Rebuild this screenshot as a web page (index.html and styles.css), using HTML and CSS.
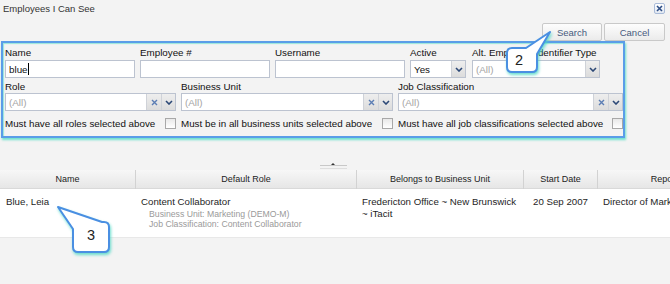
FILE: index.html
```html
<!DOCTYPE html>
<html>
<head>
<meta charset="utf-8">
<link rel="stylesheet" href="styles.css">
</head>
<body>
<div class="dialog">
  <header class="titlebar">
    <span class="title">Employees I Can See</span>
    <button class="close" aria-label="Close"><svg width="7" height="7" viewBox="0 0 7 7"><path d="M1 1L6 6M6 1L1 6" stroke="#2f4f86" stroke-width="1.6"/></svg></button>
  </header>
  <div class="actions">
    <button class="btn btn-search">Search</button>
    <button class="btn btn-cancel">Cancel</button>
  </div>

  <section class="filters">
    <div class="row row-1">
      <div class="field f-name"><label>Name</label><div class="input"><span class="val">blue</span><span class="caret"></span></div></div>
      <div class="field f-emp"><label>Employee #</label><div class="input"></div></div>
      <div class="field f-user"><label>Username</label><div class="input"></div></div>
      <div class="field f-active"><label>Active</label><div class="input"><span class="val grow">Yes</span><span class="trig"><svg width="8" height="5" viewBox="0 0 8 5"><path d="M1 1L4 4L7 1" fill="none" stroke="#2c4876" stroke-width="1.6"/></svg></span></div></div>
      <div class="field f-alt"><label>Alt. Employee Identifier Type</label><div class="input"><span class="ph grow">(All)</span><span class="trig"><svg width="8" height="5" viewBox="0 0 8 5"><path d="M1 1L4 4L7 1" fill="none" stroke="#2c4876" stroke-width="1.6"/></svg></span></div></div>
    </div>
    <div class="row row-2">
      <div class="field f-role"><label>Role</label><div class="input"><span class="ph grow">(All)</span><span class="trig x"><svg width="7" height="7" viewBox="0 0 7 7"><path d="M1 1L6 6M6 1L1 6" stroke="#5b7db4" stroke-width="1.4"/></svg></span><span class="trig"><svg width="8" height="5" viewBox="0 0 8 5"><path d="M1 1L4 4L7 1" fill="none" stroke="#2c4876" stroke-width="1.6"/></svg></span></div></div>
      <div class="field f-bu"><label>Business Unit</label><div class="input"><span class="ph grow">(All)</span><span class="trig x"><svg width="7" height="7" viewBox="0 0 7 7"><path d="M1 1L6 6M6 1L1 6" stroke="#5b7db4" stroke-width="1.4"/></svg></span><span class="trig"><svg width="8" height="5" viewBox="0 0 8 5"><path d="M1 1L4 4L7 1" fill="none" stroke="#2c4876" stroke-width="1.6"/></svg></span></div></div>
      <div class="field f-jc"><label>Job Classification</label><div class="input"><span class="ph grow">(All)</span><span class="trig x"><svg width="7" height="7" viewBox="0 0 7 7"><path d="M1 1L6 6M6 1L1 6" stroke="#5b7db4" stroke-width="1.4"/></svg></span><span class="trig"><svg width="8" height="5" viewBox="0 0 8 5"><path d="M1 1L4 4L7 1" fill="none" stroke="#2c4876" stroke-width="1.6"/></svg></span></div></div>
    </div>
    <div class="row row-3">
      <div class="check f-role"><span>Must have all roles selected above</span><span class="box"></span></div>
      <div class="check f-bu"><span>Must be in all business units selected above</span><span class="box"></span></div>
      <div class="check f-jc"><span>Must have all job classifications selected above</span><span class="box"></span></div>
    </div>
  </section>

  <div class="splitter"><span class="handle"><span class="tri"></span></span></div>

  <div class="grid">
    <div class="hrow">
      <div class="hcell">Name</div>
      <div class="hcell">Default Role</div>
      <div class="hcell">Belongs to Business Unit</div>
      <div class="hcell">Start Date</div>
      <div class="hcell">Reports To</div>
    </div>
    <div class="drow">
      <div class="dcell c-name">Blue, Leia</div>
      <div class="dcell c-role">Content Collaborator<div class="sub">Business Unit: Marketing (DEMO-M)</div><div class="sub">Job Classification: Content Collaborator</div></div>
      <div class="dcell c-bu">Fredericton Office ~ New Brunswick ~ iTacit</div>
      <div class="dcell c-date">20 Sep 2007</div>
      <div class="dcell c-rep">Director of Marketing</div>
    </div>
  </div>
</div>

<svg class="callout callout-2" width="670" height="284" viewBox="0 0 670 284">
  <path d="M512 48H526L550 32L537 54V67Q537 72 532 72H512Q507 72 507 67V53Q507 48 512 48Z" fill="#fff" stroke="#4a8fe2" stroke-width="2" stroke-linejoin="round"/>
</svg>
<span class="num num-2">2</span>
<svg class="callout callout-3" width="670" height="284" viewBox="0 0 670 284">
  <path d="M58 207L102 222H104Q109 222 109 227V247Q109 252 104 252H78Q73 252 73 247V229Z" fill="#fff" stroke="#4a8fe2" stroke-width="2" stroke-linejoin="round"/>
</svg>
<span class="num num-3">3</span>
</body>
</html>
```

FILE: styles.css
```css
html, body {
  margin: 0;
  padding: 0;
}
body {
  width: 670px;
  height: 284px;
  overflow: hidden;
  position: relative;
  background: #f3f3f3;
  font-family: "Liberation Sans", Arial, sans-serif;
  color: #1e1e1e;
}
.dialog {
  width: 670px;
}
.titlebar {
  height: 23px;
  display: flex;
  justify-content: space-between;
  align-items: flex-start;
}
.title {
  margin: 3px 0 0 3px;
  font-size: 9.5px;
  line-height: 12px;
  color: #333;
}
.close {
  margin: 3px 5px 0 0;
  width: 11px;
  height: 11px;
  padding: 0;
  border: 1px solid #a9bbd8;
  border-radius: 2px;
  background: linear-gradient(#ffffff, #e2e8f2);
  display: flex;
  align-items: center;
  justify-content: center;
}
.actions {
  height: 18px;
  display: flex;
  justify-content: flex-end;
  gap: 2px;
  padding-right: 5px;
}
.btn {
  height: 18px;
  width: 60px;
  padding: 0;
  border: 1px solid #c9c9c9;
  border-radius: 2px;
  background: linear-gradient(#fdfdfd, #ebebeb);
  font-family: "Liberation Sans", Arial, sans-serif;
  font-size: 9.5px;
  color: #475a7d;
}
.btn-cancel { width: 61px; }

.filters {
  box-sizing: border-box;
  margin-left: 1px;
  width: 624px;
  height: 97px;
  border: 2px solid #5a9de8;
  padding: 4px 0 0 2px;
  font-size: 9.8px;
  box-shadow: 1px 2px 2px rgba(90, 222, 200, 0.85), inset 1px 1px 1px rgba(90, 222, 200, 0.6);
}
.row {
  display: flex;
}
.row-2 { margin-top: 3px; }
.row-3 { margin-top: 6px; height: 13px; }

.field label {
  display: block;
  height: 12px;
  line-height: 12px;
  margin-bottom: 1px;
  color: #111;
  white-space: nowrap;
}
.row-2 .field label { margin-bottom: 0; }
.input {
  box-sizing: border-box;
  height: 18px;
  border: 1px solid #bcc3d0;
  background: #fff;
  display: flex;
  align-items: center;
  padding-left: 3px;
  overflow: hidden;
}
.val { color: #111; }
.grow { flex: 1; }
.ph { color: #a3a3a3; }
.caret {
  width: 1px;
  height: 12px;
  background: #000;
  margin-left: 0;
}
.trig {
  width: 13px;
  height: 16px;
  flex: none;
  border-left: 1px solid #cfd2d8;
  background: linear-gradient(#eeeeee, #dcdcdc);
  display: flex;
  align-items: center;
  justify-content: center;
}
.trig.x { width: 14px; }

.f-name, .f-emp, .f-user { width: 130px; margin-right: 5px; }
.f-active { width: 56px; margin-right: 6px; }
.f-alt { width: 128px; }
.f-role { width: 171px; margin-right: 5px; }
.f-bu { width: 212px; margin-right: 5px; }
.f-jc { width: 225px; }

.check {
  display: flex;
  justify-content: space-between;
  align-items: center;
  white-space: nowrap;
  color: #111;
}
.box {
  box-sizing: border-box;
  width: 11px;
  height: 11px;
  border: 1px solid #a8a8a8;
  background: linear-gradient(#e9e9e9, #ffffff);
}

.splitter {
  height: 32px;
  display: flex;
  justify-content: center;
  align-items: flex-end;
}
.handle {
  position: relative;
  width: 27px;
  height: 4px;
  margin-left: -3px;
  border-top: 1px solid #c8c8c8;
  border-bottom: 1px solid #dedede;
  box-sizing: border-box;
  margin-bottom: 1px;
}
.tri {
  position: absolute;
  left: 11px;
  top: -3px;
  width: 0;
  height: 0;
  border-left: 2px solid transparent;
  border-right: 2px solid transparent;
  border-bottom: 2px solid #333;
}

.grid {
  width: 748px;
}
.hrow, .drow {
  display: grid;
  grid-template-columns: 136px 221px 167px 74px 150px;
}
.hrow {
  height: 19px;
  background: linear-gradient(#f7f7f7, #e6e6e6);
  border-bottom: 1px solid #d9d9d9;
  box-sizing: border-box;
}
.hcell {
  font-size: 9px;
  color: #1c1c1c;
  text-align: center;
  line-height: 19px;
  border-right: 1px solid #d2d2d2;
  white-space: nowrap;
}
.drow {
  height: 49px;
  background: #fff;
  border-bottom: 1px solid #e8e8e8;
  box-sizing: border-box;
}
.dcell {
  padding-top: 7px;
  font-size: 9.7px;
  line-height: 12px;
  color: #1e1e1e;
  white-space: nowrap;
}
.c-name { padding-left: 6px; }
.c-role { padding-left: 5px; }
.c-bu { padding-left: 5px; padding-right: 5px; white-space: normal; }
.c-date { padding-left: 9px; }
.c-rep { padding-left: 5px; }
.sub {
  font-size: 8.7px;
  line-height: 10px;
  color: #9a9a9a;
  padding-left: 8px;
  margin-top: 1px;
}
.sub + .sub { margin-top: 0; }

.callout {
  position: absolute;
  left: 0;
  top: 0;
  pointer-events: none;
  filter: drop-shadow(1px 2px 1.5px rgba(70, 215, 195, 0.8));
}
.num {
  position: absolute;
  font-family: "Liberation Sans", Arial, sans-serif;
  font-size: 14.5px;
  line-height: 16px;
  color: #222;
}
.num-2 { left: 515px; top: 52px; }
.num-3 { left: 87px; top: 227px; }
```
